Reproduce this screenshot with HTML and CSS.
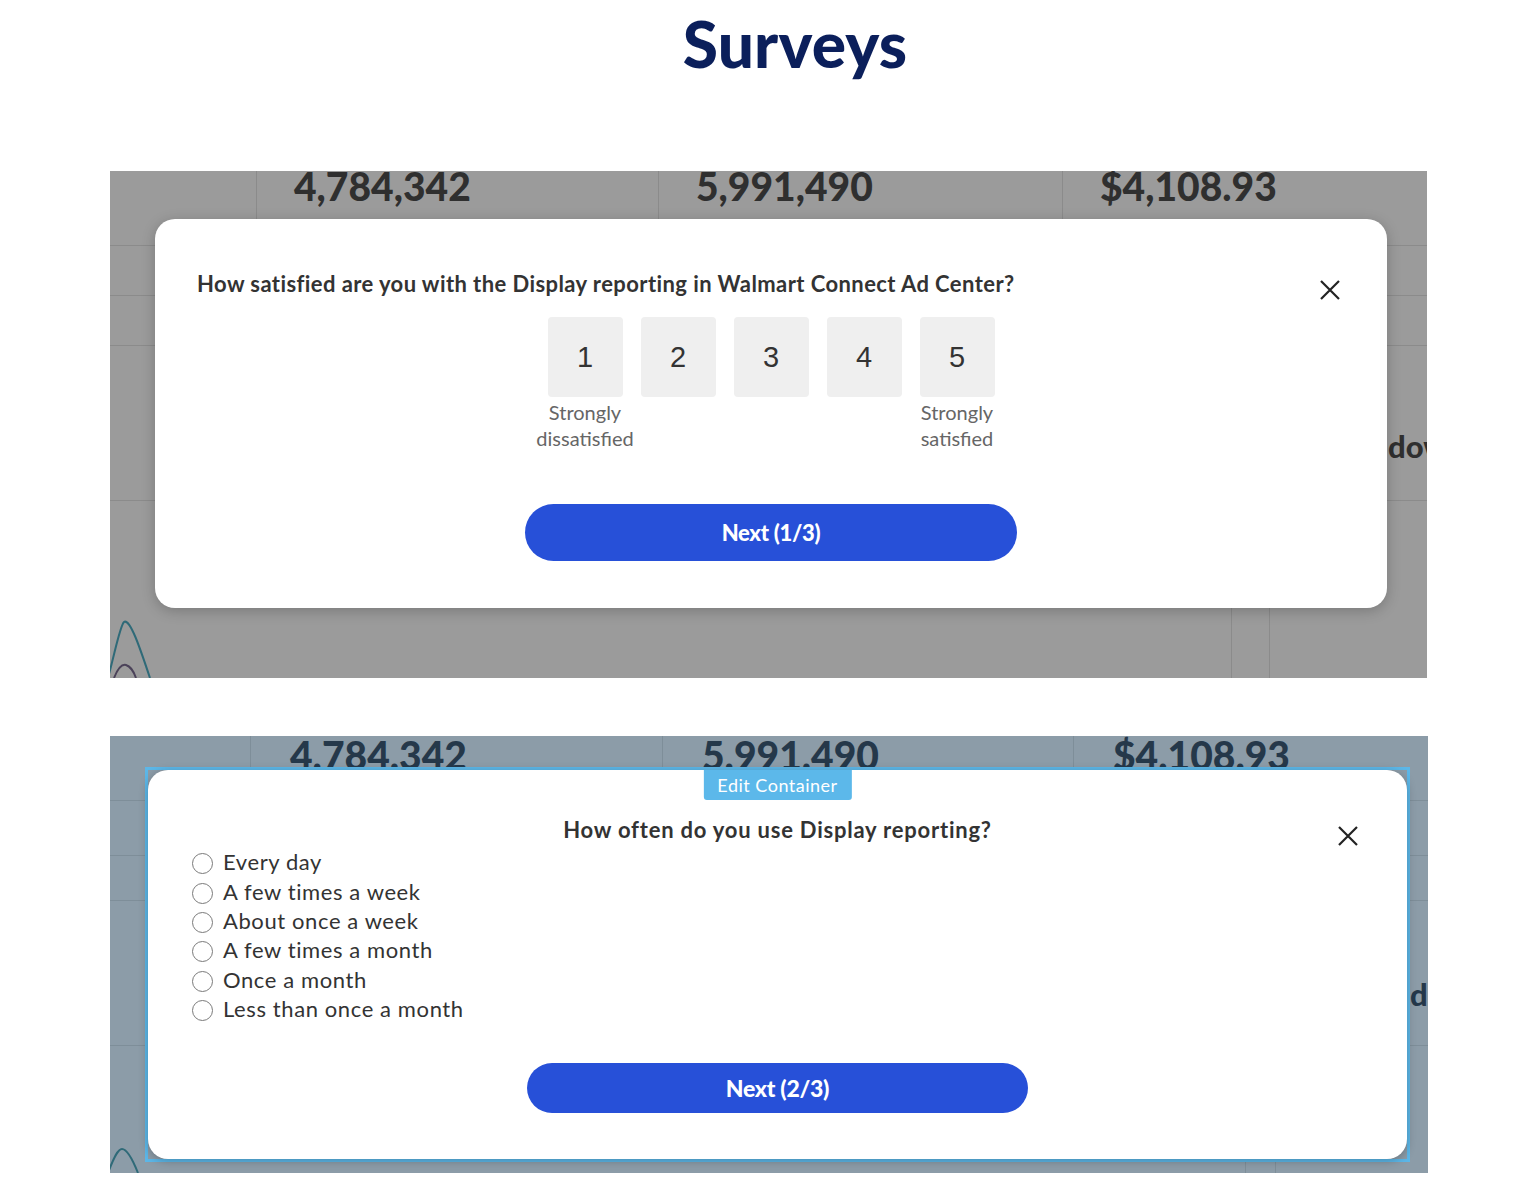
FILE: index.html
```html
<!DOCTYPE html>
<html lang="en">
<head>
<meta charset="utf-8">
<title>Surveys</title>
<link rel="stylesheet" href="styles.css">
</head>
<body>
<main class="page">
  <h1 class="title">Surveys</h1>

  <!-- Step 1: rating scale over the dimmed dashboard -->
  <section class="shot shot-gray">
    <div class="dash">
      <div class="kpis kpis-1">
        <div class="kpi"></div>
        <div class="kpi"><span class="kpi-num">4,784,342</span></div>
        <div class="kpi"><span class="kpi-num">5,991,490</span></div>
        <div class="kpi"><span class="kpi-num">$4,108.93</span></div>
      </div>
      <div class="row h50"></div>
      <div class="row h50"></div>
      <div class="row h155"><span class="peek peek-1">down</span></div>
      <div class="chart">
        <svg class="wave" width="56" height="70" viewBox="0 0 56 70">
          <path d="M-2 70 C 6 40, 10 18, 14 14 C 20 10, 30 40, 40 70" fill="none" stroke="#2f6a78" stroke-width="2"/>
          <path d="M4 70 C 8 60, 12 56, 16 57 C 20 58, 24 64, 26 70" fill="none" stroke="#4b4259" stroke-width="2"/>
        </svg>
        <div class="gridcols gridcols-1"></div>
      </div>
    </div>

    <div class="modal modal-1">
      <button class="close" aria-label="Close">
        <svg width="22" height="22" viewBox="0 0 22 22"><path d="M2 2 L20 20 M20 2 L2 20" stroke="#222" stroke-width="2.2" fill="none"/></svg>
      </button>
      <p class="question q1">How satisfied are you with the Display reporting in Walmart Connect Ad Center?</p>
      <div class="scale">
        <div class="opt"><span class="box">1</span><span class="lbl">Strongly<br>dissatisfied</span></div>
        <div class="opt"><span class="box">2</span></div>
        <div class="opt"><span class="box">3</span></div>
        <div class="opt"><span class="box">4</span></div>
        <div class="opt"><span class="box">5</span><span class="lbl">Strongly<br>satisfied</span></div>
      </div>
      <button class="next next-1">Next (1/3)</button>
    </div>
  </section>

  <!-- Step 2: frequency question in the editor, container selected -->
  <section class="shot shot-blue">
    <div class="dash">
      <div class="kpis kpis-2">
        <div class="kpi"></div>
        <div class="kpi"><span class="kpi-num">4.784.342</span></div>
        <div class="kpi"><span class="kpi-num">5.991.490</span></div>
        <div class="kpi"><span class="kpi-num">$4.108.93</span></div>
      </div>
      <div class="row h55"></div>
      <div class="row h45"></div>
      <div class="row h145"><span class="peek peek-2">down</span></div>
      <div class="chart">
        <svg class="wave wave-2" width="40" height="30" viewBox="0 0 40 30">
          <path d="M-2 30 C 4 14, 8 6, 12 6 C 18 6, 24 20, 28 30" fill="none" stroke="#2f6a78" stroke-width="2"/>
        </svg>
        <div class="gridcols gridcols-2"></div>
      </div>
    </div>

    <div class="selection">
      <div class="modal modal-2">
        <span class="tag">Edit Container</span>
        <button class="close close-2" aria-label="Close">
          <svg width="22" height="22" viewBox="0 0 22 22"><path d="M2 2 L20 20 M20 2 L2 20" stroke="#222" stroke-width="2.2" fill="none"/></svg>
        </button>
        <p class="question q2">How often do you use Display reporting?</p>
        <ul class="choices">
          <li><span class="radio"></span>Every day</li>
          <li><span class="radio"></span>A few times a week</li>
          <li><span class="radio"></span>About once a week</li>
          <li><span class="radio"></span>A few times a month</li>
          <li><span class="radio"></span>Once a month</li>
          <li><span class="radio"></span>Less than once a month</li>
        </ul>
        <button class="next next-2">Next (2/3)</button>
      </div>
    </div>
  </section>
</main>
</body>
</html>
```

FILE: styles.css
```css
* { box-sizing: border-box; }

html, body {
  margin: 0;
  padding: 0;
  background: #ffffff;
}

body {
  font-family: Lato, "Open Sans", "Liberation Sans", sans-serif;
  color: #333;
}

.page {
  width: 1518px;
  padding: 0 0 0 110px;
}

.title {
  margin: 0;
  padding-top: 8px;
  width: 1370px;
  text-align: center;
  font-family: Lato, sans-serif;
  font-weight: 900;
  font-size: 64px;
  line-height: 72px;
  color: #0b1f5b;
  letter-spacing: 0.2px;
}

/* ---------- dimmed dashboard panels ---------- */
.shot {
  position: relative;
  overflow: hidden;
}

.shot-gray {
  margin-top: 91px;
  width: 1317px;
  height: 507px;
  background: #9b9b9b;
  --line: #8b8b8b;
  --num: #2f2f2f;
}

.shot-blue {
  margin-top: 58px;
  width: 1318px;
  height: 437px;
  background: #8c9ca8;
  --line: #7e8e99;
  --num: #25384a;
}

.dash {
  display: flex;
  flex-direction: column;
  height: 100%;
}

.kpis {
  display: grid;
  flex: none;
}

.kpis-1 { grid-template-columns: 146px 402px 404px 1fr; height: 74px; }
.kpis-2 { grid-template-columns: 140px 412px 411px 1fr; height: 64px; }

.kpi {
  border-left: 1px solid var(--line);
  overflow: hidden;
}
.kpi:first-child { border-left: none; }

.kpi-num {
  display: block;
  font-weight: 900;
  font-size: 39px;
  line-height: 31px;
  color: var(--num);
  white-space: nowrap;
}

.kpis-1 .kpi-num { padding: 0 0 0 37px; }
.kpis-2 .kpi-num { padding: 4px 0 0 39px; }

.row {
  flex: none;
  border-top: 1px solid var(--line);
  position: relative;
}
.h50 { height: 50px; }
.h55 { height: 55px; }
.h45 { height: 45px; }
.h155 { height: 155px; }
.h145 { height: 145px; }

.peek {
  display: block;
  white-space: nowrap;
  font-weight: 900;
  font-size: 31px;
  line-height: 36px;
  color: var(--num);
}
.peek-1 { padding: 82px 0 0 1278px; }
.peek-2 { padding: 75px 0 0 1300px; }

.chart {
  flex: 1;
  border-top: 1px solid var(--line);
  display: flex;
  align-items: flex-end;
}

.wave { display: block; flex: none; }

.gridcols {
  margin-left: auto;
  align-self: stretch;
  border-left: 1px solid var(--line);
  border-right: 1px solid var(--line);
}
.gridcols-1 { width: 39px; margin-right: 157px; }
.gridcols-2 { width: 31px; margin-right: 152px; }

/* ---------- survey modal ---------- */
.modal {
  position: absolute;
  background: #fff;
  border-radius: 20px;
  display: flex;
  flex-direction: column;
  align-items: center;
}

.modal-1 {
  left: 45px;
  top: 48px;
  width: 1232px;
  height: 389px;
  padding: 52px 42px 0;
  box-shadow: 0 3px 14px rgba(0, 0, 0, 0.22);
}

.question {
  margin: 0;
  font-weight: 700;
  font-size: 22px;
  line-height: 26px;
  color: #333;
  white-space: nowrap;
}

.q1 {
  align-self: flex-start;
  letter-spacing: 0.42px;
}

.close {
  position: absolute;
  padding: 0;
  border: 0;
  background: none;
  width: 22px;
  height: 22px;
}
.modal-1 .close { right: 46px; top: 60px; }
.close-2 { right: 48px; top: 55px; }
.close svg { display: block; }

.scale {
  display: flex;
  gap: 18px;
  margin-top: 20px;
}

.opt {
  width: 75px;
  display: flex;
  flex-direction: column;
  align-items: center;
}

.box {
  width: 75px;
  height: 80px;
  border-radius: 4px;
  background: #efefef;
  display: flex;
  align-items: center;
  justify-content: center;
  font-family: "Liberation Sans", Arial, sans-serif;
  font-size: 29px;
  color: #333;
}

.lbl {
  margin-top: 2px;
  white-space: nowrap;
  text-align: center;
  font-size: 20px;
  line-height: 26px;
  color: #666;
}

.next {
  border: 0;
  border-radius: 30px;
  background: #2750d8;
  color: #fff;
  font-family: Lato, sans-serif;
  font-weight: 900;
  font-size: 22px;
  letter-spacing: -0.3px;
}

.next-1 {
  width: 492px;
  height: 57px;
  margin-top: 53px;
}

/* ---------- editor selection + step 2 ---------- */
.selection {
  position: absolute;
  left: 35px;
  top: 31px;
  width: 1265px;
  height: 395px;
  border: 3px solid #5cb7e8;
}

.modal-2 {
  position: relative;
  width: 100%;
  height: 100%;
  padding: 47px 44px 0;
  box-shadow: 0 2px 10px rgba(0, 0, 0, 0.25);
}

.tag {
  position: absolute;
  top: 0;
  left: 50%;
  transform: translateX(-50%);
  height: 30px;
  padding: 0 14px;
  background: #5cb8ea;
  color: #fff;
  font-size: 18px;
  letter-spacing: 0.5px;
  line-height: 31px;
  border-radius: 0 0 3px 3px;
  white-space: nowrap;
}

.q2 { letter-spacing: 0.78px; }

.choices {
  list-style: none;
  margin: 4px 0 0;
  padding: 0;
  align-self: flex-start;
}

.choices li {
  display: flex;
  align-items: center;
  height: 29.4px;
  font-size: 22px;
  color: #333;
  white-space: nowrap;
  letter-spacing: 0.6px;
}

.radio {
  width: 21px;
  height: 21px;
  border: 1.5px solid #7a7a7a;
  border-radius: 50%;
  margin-right: 10px;
  flex: none;
  transform: translateY(2px);
}

.next-2 {
  width: 501px;
  height: 50px;
  margin-top: 40px;
  font-size: 23px;
}
```
